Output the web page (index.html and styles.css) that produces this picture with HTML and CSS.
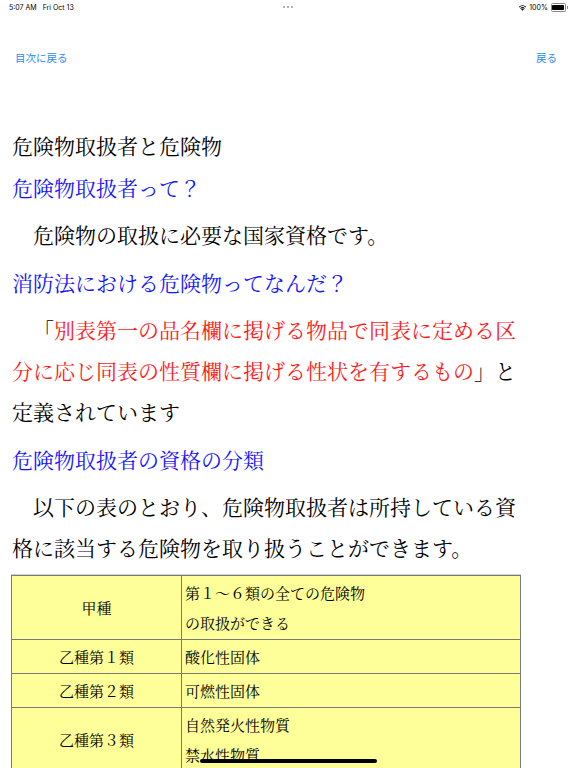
FILE: index.html
```html
<!DOCTYPE html>
<html lang="ja">
<head>
<meta charset="utf-8">
<title>危険物取扱者と危険物</title>
<link rel="stylesheet" href="styles.css">
</head>
<body>
<div class="status">
  <div class="status-left"><span>5:07 AM</span><span>Fri Oct 13</span></div>
  <div class="status-dots"><i></i><i></i><i></i></div>
  <div class="status-right">
    <svg class="wifi" width="9" height="7" viewBox="0 0 18 14">
      <path d="M9 13.5 L6.2 10.4 A4 4 0 0 1 11.8 10.4 Z" fill="#000"/>
      <path d="M4.4 8.4 A6.6 6.6 0 0 1 13.6 8.4 L12.3 9.8 A4.8 4.8 0 0 0 5.7 9.8 Z" fill="#000"/>
      <path d="M1.6 5.4 A10.6 10.6 0 0 1 16.4 5.4 L15 6.9 A8.6 8.6 0 0 0 3 6.9 Z" fill="#000"/>
    </svg>
    <span>100%</span>
    <span class="battery"><span class="battery-fill"></span></span><span class="battery-nub"></span>
  </div>
</div>
<div class="nav">
  <a class="nav-link">目次に戻る</a>
  <a class="nav-link">戻る</a>
</div>
<main class="content">
  <div class="title">危険物取扱者と危険物</div>
  <div class="heading">危険物取扱者って？</div>
  <p class="para">　危険物の取扱に必要な国家資格です。</p>
  <div class="heading">消防法における危険物ってなんだ？</div>
  <p class="para">　「<span class="red">別表第一の品名欄に掲げる物品で同表に定める区分に応じ同表の性質欄に掲げる性状を有するもの</span>」と定義されています</p>
  <div class="heading">危険物取扱者の資格の分類</div>
  <p class="para">　以下の表のとおり、危険物取扱者は所持している資格に該当する危険物を取り扱うことができます。</p>
  <table class="grid">
    <tr><td class="kind">甲種</td><td class="desc">第１～６類の全ての危険物<br>の取扱ができる</td></tr>
    <tr><td class="kind">乙種第１類</td><td class="desc">酸化性固体</td></tr>
    <tr><td class="kind">乙種第２類</td><td class="desc">可燃性固体</td></tr>
    <tr><td class="kind">乙種第３類</td><td class="desc">自然発火性物質<br>禁水性物質</td></tr>
    <tr><td class="kind">乙種第４類</td><td class="desc">引火性液体</td></tr>
    <tr><td class="kind">乙種第５類</td><td class="desc">自己反応性物質</td></tr>
    <tr><td class="kind">乙種第６類</td><td class="desc">酸化性液体</td></tr>
  </table>
</main>
<div class="home-indicator"></div>
</body>
</html>
```
FILE: styles.css
```css
html, body {
  margin: 0;
  padding: 0;
  background: #fff;
}
body {
  width: 576px;
  overflow: hidden;
  font-family: "Noto Serif CJK JP", "Noto Sans CJK JP", serif;
  color: #000;
  text-spacing-trim: space-all;
}
.status {
  height: 15px;
  display: flex;
  align-items: center;
  justify-content: space-between;
  padding: 0 8px 0 9px;
  font-family: Inter, "Liberation Sans", sans-serif;
  font-size: 7px;
  color: #000;
  position: relative;
}
.status-left {
  display: flex;
  gap: 6px;
}
.status-dots {
  position: absolute;
  left: 283px;
  top: 6px;
  display: flex;
  gap: 2px;
}
.status-dots i {
  display: block;
  width: 2px;
  height: 2px;
  border-radius: 50%;
  background: #999;
}
.status-right {
  display: flex;
  align-items: center;
  gap: 2px;
}
.battery {
  display: block;
  width: 12px;
  height: 5px;
  border: 0.8px solid #888;
  border-radius: 1.5px;
  padding: 0.6px;
  margin-left: 1px;
}
.battery-fill {
  display: block;
  width: 100%;
  height: 100%;
  background: #000;
  border-radius: 0.8px;
}
.battery-nub {
  display: block;
  width: 1px;
  height: 2.5px;
  background: #888;
  margin-left: -1px;
}
.nav {
  margin-top: 30px;
  height: 24px;
  display: flex;
  justify-content: space-between;
  align-items: center;
  padding: 0 19px 0 15px;
  font-family: "Noto Sans CJK JP", sans-serif;
  font-size: 10.5px;
}
.nav-link {
  color: #2a8cf5;
}
.content {
  padding: 58px 0 0 12px;
  width: 512px;
}
.title {
  font-size: 21px;
  line-height: 36px;
  margin-bottom: 4px;
}
.heading {
  font-size: 21px;
  line-height: 40px;
  color: #1414ff;
  margin-top: 7px;
}
.title + .heading {
  margin-top: 0;
}
.para {
  font-size: 21px;
  line-height: 41px;
  margin: 7px 0 0;
}
.red {
  color: #ff1a1a;
}
.grid {
  margin: 7px 0 0 -1px;
  width: 510px;
  border-collapse: collapse;
  background: #ffff99;
  font-size: 15px;
  box-shadow: 0 -1px 0 #d0d0dc;
}
.grid td {
  border: 1px solid #7a7a7a;
  padding: 1.5px 3px;
  line-height: 30px;
  vertical-align: middle;
}
.grid .kind {
  width: 163px;
  text-align: center;
}
.grid .desc {
  text-align: left;
}
.home-indicator {
  position: fixed;
  left: 200px;
  bottom: 5px;
  width: 177px;
  height: 4px;
  border-radius: 2px;
  background: #000;
}
```
